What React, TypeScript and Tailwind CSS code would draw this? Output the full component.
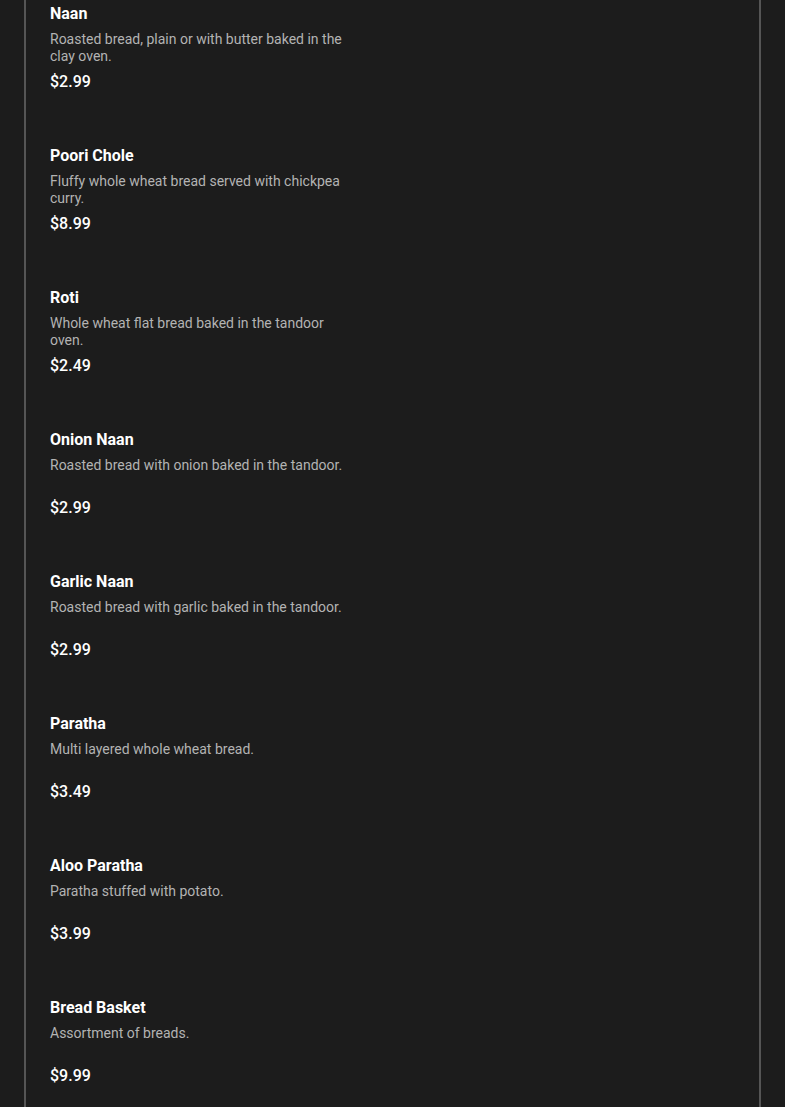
import React from "react";

const items = [
  { name: "Naan", desc: "Roasted bread, plain or with butter baked in the clay oven.", price: "$2.99" },
  { name: "Poori Chole", desc: "Fluffy whole wheat bread served with chickpea curry.", price: "$8.99" },
  { name: "Roti", desc: "Whole wheat flat bread baked in the tandoor oven.", price: "$2.49" },
  { name: "Onion Naan", desc: "Roasted bread with onion baked in the tandoor.", price: "$2.99" },
  { name: "Garlic Naan", desc: "Roasted bread with garlic baked in the tandoor.", price: "$2.99" },
  { name: "Paratha", desc: "Multi layered whole wheat bread.", price: "$3.49" },
  { name: "Aloo Paratha", desc: "Paratha stuffed with potato.", price: "$3.99" },
  { name: "Bread Basket", desc: "Assortment of breads.", price: "$9.99" },
];

export default function App() {
  return (
    <div className="min-h-[1107px] bg-[#1c1c1c] font-['Roboto',sans-serif]">
      <div className="mx-6 min-h-[1107px] border-x-2 border-[#555555] px-6 pt-[2px]">
        {items.map((item) => (
          <div key={item.name} className="h-[142px]">
            <h3 className="text-base leading-6 font-bold text-white">{item.name}</h3>
            <p className="mt-[5px] h-[34px] w-[300px] text-sm leading-[17px] text-[#b3b3b3]">
              {item.desc}
            </p>
            <div className="mt-[5px] text-base leading-6 font-medium text-white">{item.price}</div>
          </div>
        ))}
      </div>
    </div>
  );
}
